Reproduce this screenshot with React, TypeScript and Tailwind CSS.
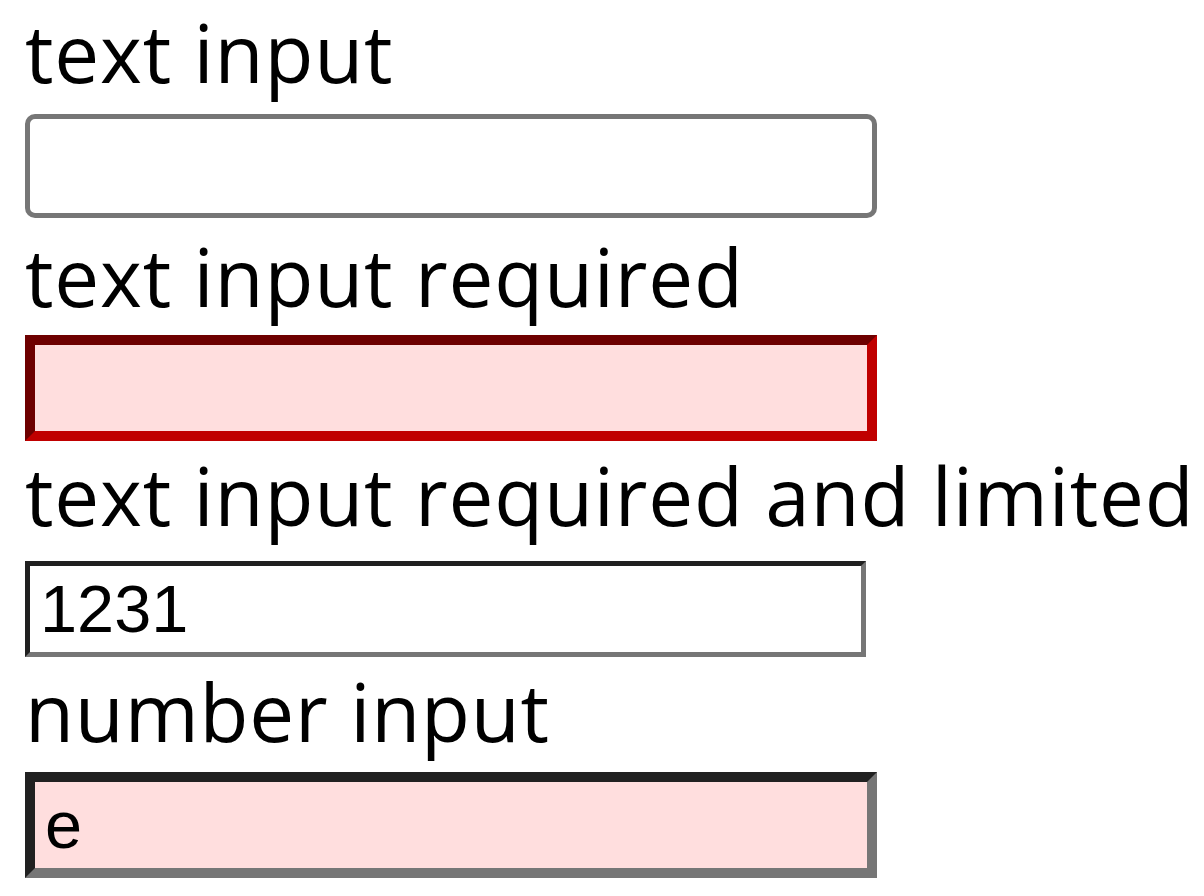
export default function App() {
  return (
    <div className="min-h-screen bg-white pl-[25px] font-['Open_Sans',sans-serif] text-black">
      <div className="flex flex-col items-start">
        <label className="mt-[4px] text-[80px] leading-[1.2] tracking-[0.8px] whitespace-nowrap">text input</label>
        <input
          type="text"
          className="mt-[14px] h-[104px] w-[852px] rounded-[10px] border-[5px] border-solid border-[#767676] bg-white px-[10px] font-['Liberation_Sans',Arial,sans-serif] text-[66.67px] outline-none"
        />

        <label className="mt-[10px] text-[80px] leading-[1.2] tracking-[0.8px] whitespace-nowrap">text input required</label>
        <input
          type="text"
          required
          className="mt-[11px] h-[106px] w-[852px] border-[10px] border-solid border-t-[#6e0000] border-l-[#6e0000] border-r-[#c00000] border-b-[#c00000] bg-[#ffdede] px-[10px] font-['Liberation_Sans',Arial,sans-serif] text-[66.67px] outline-none"
        />

        <label className="mt-[6px] text-[80px] leading-[1.2] tracking-[0.8px] whitespace-nowrap">text input required and limited</label>
        <input
          type="text"
          required
          maxLength={4}
          defaultValue="1231"
          className="mt-[18px] h-[96px] w-[841px] border-[5px] border-solid border-t-[#202020] border-l-[#202020] border-r-[#767676] border-b-[#767676] bg-white px-[10px] font-['Liberation_Sans',Arial,sans-serif] text-[66.67px] text-black outline-none"
        />

        <label className="mt-[6px] text-[80px] leading-[1.2] tracking-[0.8px] whitespace-nowrap">number input</label>
        <input
          type="text"
          defaultValue="e"
          className="mt-[13px] h-[106px] w-[852px] border-[10px] border-solid border-t-[#212121] border-l-[#212121] border-r-[#767676] border-b-[#767676] bg-[#ffdede] px-[10px] font-['Liberation_Sans',Arial,sans-serif] text-[66.67px] text-black outline-none"
        />
      </div>
    </div>
  );
}
